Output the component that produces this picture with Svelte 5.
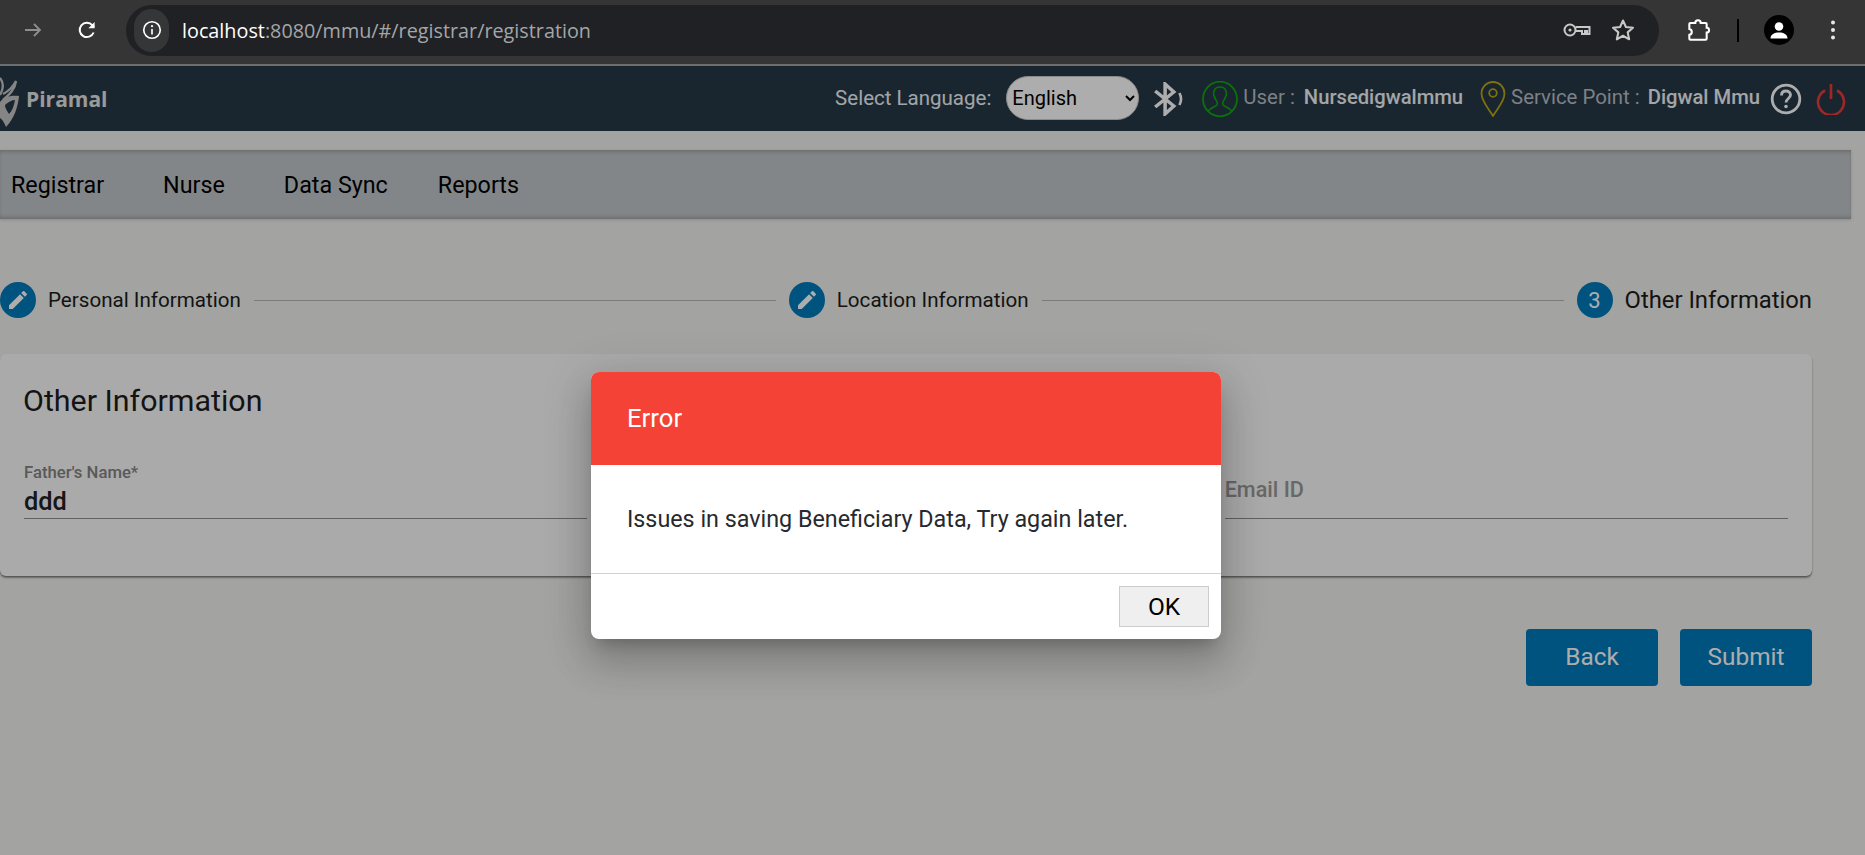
<script>
  const steps = [
    { label: 'Personal Information', done: true },
    { label: 'Location Information', done: true },
    { label: 'Other Information', done: false, n: 3 }
  ];
  const menu = ['Registrar', 'Nurse', 'Data Sync', 'Reports'];
</script>

<div class="window">
  <div class="toolbar">
    <svg class="tb-arrow" viewBox="0 0 24 24" width="24" height="24"><path d="M4 12h15M13 6l6 6-6 6" fill="none" stroke="#8e8e8e" stroke-width="1.8"/></svg>
    <svg class="tb-reload" viewBox="0 0 24 24" width="24" height="24"><path d="M18.6 14.5a7.2 7.2 0 1 1-1.3-7.4L19 9" fill="none" stroke="#fff" stroke-width="2"/><path d="M19.6 4v6.2h-6.2z" fill="#fff"/></svg>
    <div class="omnibox">
      <span class="chip">
        <svg viewBox="0 0 24 24" width="22" height="22"><circle cx="12" cy="12" r="9" fill="none" stroke="#fff" stroke-width="1.8"/><path d="M12 11v6" stroke="#fff" stroke-width="1.8"/><circle cx="12" cy="7.8" r="1.2" fill="#fff"/></svg>
      </span>
      <span class="url"><b>localhost</b>:8080/mmu/#/registrar/registration</span>
      <svg class="key" viewBox="0 0 28 20" width="28" height="20"><circle cx="7" cy="10" r="5.5" fill="none" stroke="#c8c8c8" stroke-width="2"/><circle cx="7" cy="10" r="1.6" fill="#c8c8c8"/><path d="M12.5 7h14v7h-2.5v-3h-2v3h-3v-3h-6.500" fill="none" stroke="#c8c8c8" stroke-width="2"/></svg>
      <svg class="star" viewBox="0 0 24 24" width="26" height="26"><path d="M12 3.200l2.700 6 6.500.7-4.900 4.300 1.400 6.400-5.700-3.300-5.700 3.300 1.400-6.400-4.900-4.300 6.500-.7z" fill="none" stroke="#c8c8c8" stroke-width="1.900" stroke-linejoin="round"/></svg>
    </div>
    <svg class="puzzle" viewBox="0 0 24 24" width="26" height="26"><path d="M5 5.500h4.500a2.500 2.500 0 0 1 5 0H19a1 1 0 0 1 1 1V10a2.200 2.200 0 0 1 0 4.400V20a1 1 0 0 1-1 1H5a1 1 0 0 1-1-1v-3.500a2.800 2.800 0 0 0 0-5.500V6.500a1 1 0 0 1 1-1z" fill="none" stroke="#fff" stroke-width="1.900"/></svg>
    <span class="divider"></span>
    <span class="avatar">
      <svg viewBox="0 0 24 24" width="24" height="24"><circle cx="12" cy="8.500" r="4.300" fill="#fff"/><path d="M3.500 20.500c0-4.200 4-6 8.500-6s8.500 1.800 8.500 6z" fill="#fff"/></svg>
    </span>
    <svg class="dots" viewBox="0 0 6 24" width="6" height="24"><circle cx="3" cy="4.500" r="2" fill="#e8e8e8"/><circle cx="3" cy="12" r="2" fill="#e8e8e8"/><circle cx="3" cy="19.500" r="2" fill="#e8e8e8"/></svg>
  </div>

  <div class="page">
    <header class="topbar">
      <div class="brand">
        <svg viewBox="0 0 22 56" width="22" height="56">
          <path d="M0 6c4 5 4 10 0 17M3 22c6-3 10-7 13-13-1 8-6 13-13 19" fill="none" stroke="#c4c4c4" stroke-width="2.400"/>
          <path d="M0 30c3-4 9-7 19-6-1 11-5 23-13 31-2-5-4-8-6-9" fill="#c4c4c4"/>
          <path d="M5 33c3-3 7-5 10-5-1 6-3 11-6 14-2-3-4-6-4-9z" fill="#263847"/>
        </svg>
        <span>Piramal</span>
      </div>
      <div class="tools">
        <span class="lang">Select Language:</span>
        <select class="lang-select"><option>English</option></select>
        <svg class="bt" viewBox="0 0 30 34" width="33" height="34" preserveAspectRatio="none"><path d="M2 9l17 15-8 8V2l8 8L2 25" fill="none" stroke="#fff" stroke-width="3.200"/><path d="M24 11c2 4 2 8 0 12" fill="none" stroke="#fff" stroke-width="2.400"/></svg>
        <svg class="user" viewBox="0 0 36 36" width="36" height="36"><ellipse cx="18" cy="18" rx="17" ry="17.300" fill="none" stroke="#0fa80f" stroke-width="1.800"/><path d="M6 31c1-4 7-5 9-7 1-2 0-3-1-5-2-3-3-6-2-9 1-3 4-4 6-4s5 1 6 4c1 3 0 6-2 9-1 2-2 3-1 5 2 2 8 3 9 7" fill="none" stroke="#0fa80f" stroke-width="1.600"/></svg>
        <span class="dim user-l">User :</span>
        <span class="val user-v">Nursedigwalmmu</span>
        <svg class="pin" viewBox="0 0 26 36" width="26" height="36"><path d="M13 35C8 27 1.500 20 1.500 12.500a11.500 11.500 0 0 1 23 0C24.500 20 18 27 13 35z" fill="none" stroke="#b8a716" stroke-width="1.800"/><circle cx="13" cy="12" r="3.800" fill="none" stroke="#b8a716" stroke-width="1.800"/></svg>
        <span class="dim sp-l">Service Point :</span>
        <span class="val sp-v">Digwal Mmu</span>
        <svg class="help" viewBox="0 0 32 32" width="32" height="32"><circle cx="16" cy="16" r="13.800" fill="none" stroke="#fff" stroke-width="2.800"/><path d="M11.500 12.500c0-3 2-4.500 4.500-4.500s4.500 1.500 4.500 4c0 3.500-4.500 3.500-4.500 7.500" fill="none" stroke="#fff" stroke-width="2.800"/><circle cx="16" cy="23.500" r="1.800" fill="#fff"/></svg>
        <svg class="power" viewBox="0 0 30 32" width="30" height="32"><path d="M9 7.500a13 13 0 1 0 12 0" fill="none" stroke="#ee3a3a" stroke-width="2.600"/><path d="M15 1v15" stroke="#ee3a3a" stroke-width="2.600"/></svg>
      </div>
    </header>

    <nav class="menu">
      {#each menu as item}
        <a href="#/" class="menu-item">{item}</a>
      {/each}
    </nav>

    <div class="stepper">
      {#each steps as step, i}
        {#if i > 0}<span class="step-line"></span>{/if}
        <div class="step" class:current={!step.done}>
          <span class="bubble">
            {#if step.done}
              <svg viewBox="0 0 24 24" width="24" height="24"><path d="M3 17.250V21h3.750L17.810 9.940l-3.750-3.750L3 17.250zM20.710 7.040a1 1 0 0 0 0-1.410l-2.340-2.340a1 1 0 0 0-1.410 0l-1.830 1.830 3.750 3.750 1.830-1.830z" fill="#fff"/></svg>
            {:else}
              {step.n}
            {/if}
          </span>
          <span class="step-label">{step.label}</span>
        </div>
      {/each}
    </div>

    <section class="card">
      <h2>Other Information</h2>
      <div class="fields">
        <div class="field">
          <span class="float">Father's Name*</span>
          <span class="value">ddd</span>
        </div>
        <div class="field"></div>
        <div class="field">
          <span class="placeholder">Email ID</span>
        </div>
      </div>
    </section>

    <div class="actions">
      <button class="primary">Back</button>
      <button class="primary">Submit</button>
    </div>

    <div class="backdrop"></div>
    <div class="dialog" role="alertdialog">
      <div class="dialog-head">Error</div>
      <div class="dialog-body">Issues in saving Beneficiary Data, Try again later.</div>
      <div class="dialog-foot"><button class="ok">OK</button></div>
    </div>
  </div>
</div>

<style>
  :global(body) { margin: 0; overflow: hidden; }
  .window { width: 1865px; height: 855px; display: flex; flex-direction: column; font-family: Roboto, "Liberation Sans", sans-serif; overflow: hidden; }

  .toolbar { height: 60px; padding-bottom: 4px; flex: none; background: #353535; border-bottom: 2px solid #6e6e6e; display: flex; align-items: center; box-sizing: content-box; position: relative; }
  .tb-arrow { margin-left: 21px; }
  .tb-reload { margin-left: 30px; }
  .omnibox { margin-left: 27px; width: 1533px; height: 51px; border-radius: 26px; background: #202124; display: flex; align-items: center; }
  .chip { width: 35px; height: 43px; margin-left: 8px; border-radius: 22px; background: #353638; display: flex; align-items: center; justify-content: center; }
  .url { margin-left: 13px; font: 19.800px "Open Sans", "Noto Sans", sans-serif; color: #a4a6a8; white-space: nowrap; }
  .url b { font-weight: 400; color: #fff; }
  .key { margin-left: auto; }
  .star { margin-left: 19px; margin-right: 23px; }
  .puzzle { margin-left: 26px; }
  .divider { width: 2px; height: 23px; background: #000; margin-left: 26px; }
  .avatar { width: 30px; height: 30px; border-radius: 50%; background: #000; margin-left: 25px; display: flex; align-items: center; justify-content: center; }
  .dots { margin-left: 36px; }

  .page { position: relative; flex: 1; background: #f0f0ed; }
  .backdrop { position: absolute; inset: 0; background: rgba(0, 0, 0, .32); }

  .topbar { height: 65px; background: #263847; display: flex; align-items: center; color: #fff; }
  .brand { display: flex; align-items: center; }
  .brand svg { display: block; margin-top: 3px; }
  .brand span { margin-left: 4px; font: 700 21px "Open Sans", sans-serif; color: #e3e3e3; }
  .tools { margin-left: auto; display: flex; align-items: center; padding-right: 19px; }
  .lang { font-size: 20.500px; margin-top: -1px; color: #eef3f7; }
  .lang-select { width: 133px; height: 44px; margin-left: 15px; margin-bottom: 2px; border-radius: 22px; border: 1px solid #ccc; background-color: #fff; color: #000; font: 20px Roboto, sans-serif; padding-left: 1px; }
  .bt { margin-left: 14px; }
  .user { margin-left: 16px; }
  .dim, .val { margin-top: -3px; }
  .dim { font-size: 20.400px; color: #b8bec3; }
  .val { font-size: 20.200px; font-weight: 500; color: #f2f4f6; }
  .user-l { margin-left: 5px; }
  .user-v { margin-left: 9px; }
  .pin { margin-left: 17px; }
  .sp-l { margin-left: 5px; }
  .sp-v { margin-left: 8px; }
  .help { margin-left: 10px; }
  .power { margin-left: 14px; }

  .menu { margin-top: 19px; width: 1851px; height: 69px; background: #c1c6c9; box-shadow: inset 0 4px 5px -3px rgba(0,0,0,.25), inset 0 -4px 5px -3px rgba(0,0,0,.25), 0 1px 3px rgba(0,0,0,.15); display: flex; align-items: center; padding-left: 11px; box-sizing: border-box; }
  .menu-item { color: #000; text-decoration: none; font-size: 23.300px; margin-right: 59px; }
  .menu-item:nth-child(3) { margin-right: 50px; }

  .stepper { margin-top: 63px; width: 1812px; height: 36px; display: flex; align-items: center; }
  .step { display: flex; align-items: center; }
  .bubble { width: 36px; height: 36px; border-radius: 50%; background: #0079bb; color: #fff; display: flex; align-items: center; justify-content: center; font-size: 22px; flex: none; }
  .step-label { margin-left: 12px; font-size: 20.600px; color: #1c1c1c; white-space: nowrap; }
  .current .step-label { font-size: 23.800px; }
  .step-line { flex: 1; height: 1px; background: #b5b5b5; margin: 0 13px; }

  .card { margin-top: 36px; width: 1812px; height: 222px; background: #fbfbfb; border-radius: 6px; box-shadow: 0 2px 2px rgba(0,0,0,.35), 0 1px 1px rgba(0,0,0,.2); padding: 27px 24px 0 23px; box-sizing: border-box; }
  .card h2 { margin: 0; font-size: 30.400px; font-weight: 400; line-height: 40px; color: #1d1d1d; }
  .fields { margin-top: 24px; margin-left: 1px; display: grid; grid-template-columns: repeat(3, 1fr); column-gap: 37px; }
  .field { height: 74px; border-bottom: 1px solid #8f8f8f; box-sizing: border-box; display: flex; flex-direction: column; justify-content: flex-end; position: relative; }
  .field:nth-child(2) { visibility: hidden; }
  .float { font-size: 16.700px; font-weight: 500; color: #848484; line-height: 20px; margin-bottom: 1px; }
  .value { font-size: 25.400px; font-weight: 500; color: #222; line-height: 34px; }
  .placeholder { font-size: 21.600px; font-weight: 500; color: #9a9a9a; line-height: 28px; margin-bottom: 14px; }

  .actions { margin-top: 53px; width: 1812px; display: flex; justify-content: flex-end; column-gap: 22px; }
  .primary { width: 132px; height: 57px; border: 0; border-radius: 4px; background: #0079bb; color: #fff; font: 24.400px Roboto, sans-serif; padding: 0 0 2px; }

  .dialog { position: absolute; left: 591px; top: 306px; width: 630px; height: 267px; background: #fff; border-radius: 8px; overflow: hidden; box-shadow: 0 11px 15px -7px rgba(0,0,0,.2), 0 24px 38px 3px rgba(0,0,0,.14), 0 9px 46px 8px rgba(0,0,0,.12); display: flex; flex-direction: column; }
  .dialog-head { height: 93px; flex: none; background: #f44336; color: #fff; font-size: 25.700px; display: flex; align-items: center; padding-left: 36px; padding-bottom: 2px; box-sizing: border-box; }
  .dialog-body { height: 109px; flex: none; padding-left: 36px; font-size: 23.300px; color: #26292e; display: flex; align-items: center; border-bottom: 1px solid #d2d2d2; box-sizing: border-box; }
  .dialog-foot { flex: 1; display: flex; justify-content: flex-end; align-items: flex-start; padding: 12px 12px 0 0; }
  .ok { width: 90px; height: 41px; background: #efefef; border: 1px solid #ccc; color: #000; font: 24.500px Roboto, sans-serif; padding: 0; }
</style>
